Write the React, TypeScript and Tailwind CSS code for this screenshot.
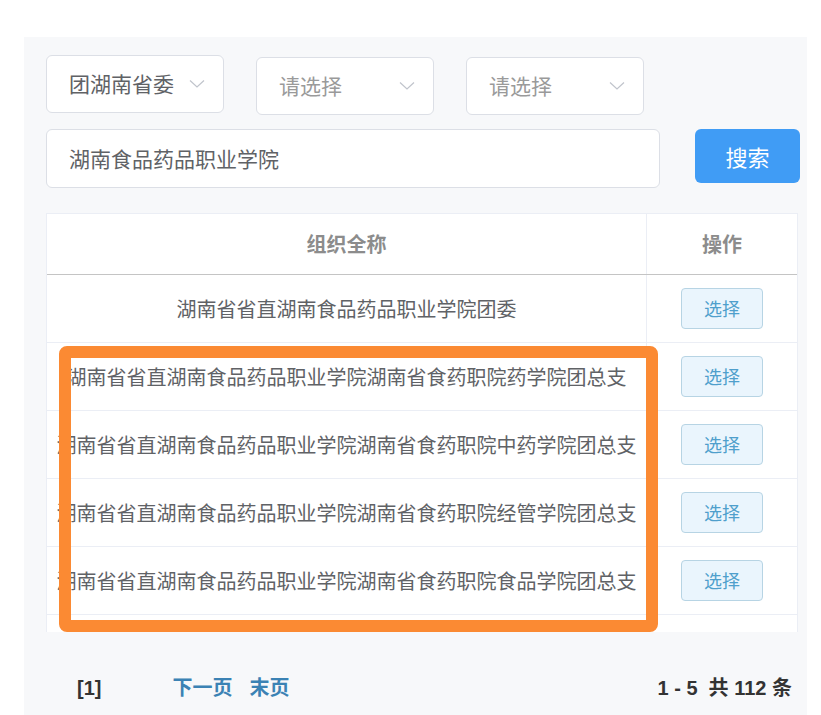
import React from 'react';

const CJK = "font-['Noto_Sans_CJK_SC','Noto_Sans',sans-serif]";

const rows = [
  '湖南省省直湖南食品药品职业学院团委',
  '湖南省省直湖南食品药品职业学院湖南省食药职院药学院团总支',
  '湖南省省直湖南食品药品职业学院湖南省食药职院中药学院团总支',
  '湖南省省直湖南食品药品职业学院湖南省食药职院经管学院团总支',
  '湖南省省直湖南食品药品职业学院湖南省食药职院食品学院团总支',
];

const Chevron: React.FC = () => (
  <svg width="16" height="10" viewBox="0 0 16 10" fill="none" className="shrink-0">
    <path d="M1 1.5 L8 8 L15 1.5" stroke="#c0c4cc" strokeWidth="1.2" />
  </svg>
);

const SelectBox: React.FC<{ value: string; placeholder?: boolean; className?: string }> = ({ value, placeholder, className }) => (
  <div
    className={`flex h-[58px] w-[178px] items-center justify-between rounded-[6px] border border-[#dcdfe6] bg-white pl-[22px] pr-[18px] text-[21px] ${
      placeholder ? 'text-[#9a9a9a]' : 'text-[#606266]'
    } ${className ?? ''}`}
  >
    <span>{value}</span>
    <Chevron />
  </div>
);

export default function App() {
  return (
    <div className={`relative h-[715px] w-[821px] overflow-hidden bg-white pl-[24px] pt-[37px] ${CJK}`}>
      <div className="h-[678px] w-[783px] bg-[#f7f8fa] pl-[22px] pt-[18px]">
        {/* filters */}
        <div className="flex items-start gap-[32px]">
          <SelectBox value="团湖南省委" />
          <SelectBox value="请选择" placeholder className="mt-[2px]" />
          <SelectBox value="请选择" placeholder className="mt-[2px]" />
        </div>

        <div className="mt-[14px] flex items-start gap-[35px]">
          <div className="flex h-[59px] w-[614px] items-center rounded-[6px] border border-[#dcdfe6] bg-white pl-[22px] text-[21px] text-[#606266]">
            湖南食品药品职业学院
          </div>
          <button className="h-[54px] w-[105px] rounded-[6px] bg-[#409cf5] text-[22px] text-white">搜索</button>
        </div>

        {/* table */}
        <div className="mt-[25px] w-[752px] border-l border-r border-t border-[#ebeef5] bg-white">
          <div className="flex h-[61px] border-b border-[#c4c4c4] text-[20px] font-bold text-[#8c8c8c]">
            <div className="flex w-[600px] items-center justify-center border-r border-[#ebeef5]">组织全称</div>
            <div className="flex flex-1 items-center justify-center">操作</div>
          </div>
          {rows.map((name, i) => (
            <div key={i} className="flex h-[68px] border-b border-[#ebeef5]">
              <div className="flex w-[600px] items-center justify-center overflow-hidden whitespace-nowrap border-r border-[#ebeef5] text-[20px] text-[#606266]">
                {name}
              </div>
              <div className="flex flex-1 items-center justify-center">
                <button className="h-[41px] w-[82px] rounded-[4px] border border-[#b7d4e4] bg-[#eaf5fd] text-[18px] text-[#4f9fcc]">
                  选择
                </button>
              </div>
            </div>
          ))}
          <div className="h-[17px]" />
        </div>

        {/* pagination */}
        <div className="mt-[41px] flex items-center pr-[15px] font-['Liberation_Sans','Noto_Sans_CJK_SC',sans-serif] text-[20px] font-bold">
          <span className="ml-[31px] text-[#333]">[1]</span>
          <span className="ml-[71px] text-[#3b82b4]">下一页</span>
          <span className="ml-[17px] text-[#3b82b4]">末页</span>
          <span className="ml-auto text-[#333]">1 - 5&nbsp; 共 112 条</span>
        </div>
      </div>

      {/* highlight annotation */}
      <div className="pointer-events-none absolute left-[59px] top-[346px] h-[286px] w-[599px] rounded-[8px] border-[12px] border-[#fb8a33]" />
    </div>
  );
}
